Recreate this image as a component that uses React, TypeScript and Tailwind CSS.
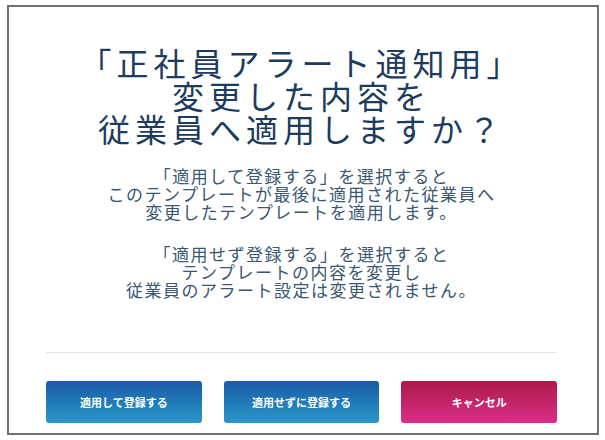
import React from "react"

const jp = { fontFamily: '"Noto Sans CJK JP", "Noto Sans", sans-serif' }

export default function App() {
  const buttons = [
    { label: "適用して登録する", className: "bg-gradient-to-b from-[#1a5ca6] to-[#2b97c9]" },
    { label: "適用せずに登録する", className: "bg-gradient-to-b from-[#1a5ca6] to-[#2b97c9]" },
    { label: "キャンセル", className: "bg-gradient-to-b from-[#ad1a49] to-[#da2d89]" },
  ]

  return (
    <div className="w-[605px] h-[440px] bg-white pt-[5px] pl-[7px] pr-[6px] pb-[5px]" style={jp}>
      <div className="h-full border-2 border-[#707070] flex flex-col pl-[37px] pr-[40px] pt-[39px] pb-[10px]">
        <h1 className="text-center text-[32px] leading-[33px] tracking-[5px] font-normal text-[#1b3c5e]">
          「正社員アラート通知用」
          <br />
          変更した内容を
          <br />
          従業員へ適用しますか？
        </h1>

        <div className="mt-[22px] text-center text-[17px] leading-[18px] tracking-[1.5px] text-[#3a5671]">
          <p>
            「適用して登録する」を選択すると
            <br />
            このテンプレートが最後に適用された従業員へ
            <br />
            変更したテンプレートを適用します。
          </p>
          <p className="mt-[24px]">
            「適用せず登録する」を選択すると
            <br />
            テンプレートの内容を変更し
            <br />
            従業員のアラート設定は変更されません。
          </p>
        </div>

        <div className="mt-auto border-t border-[#e6e6e6]" />

        <div className="mt-[28px] grid grid-cols-3 gap-[22px]">
          {buttons.map((b) => (
            <button
              key={b.label}
              className={`h-[42px] rounded-[3px] text-white text-[11px] font-bold ${b.className}`}
            >
              {b.label}
            </button>
          ))}
        </div>
      </div>
    </div>
  )
}
